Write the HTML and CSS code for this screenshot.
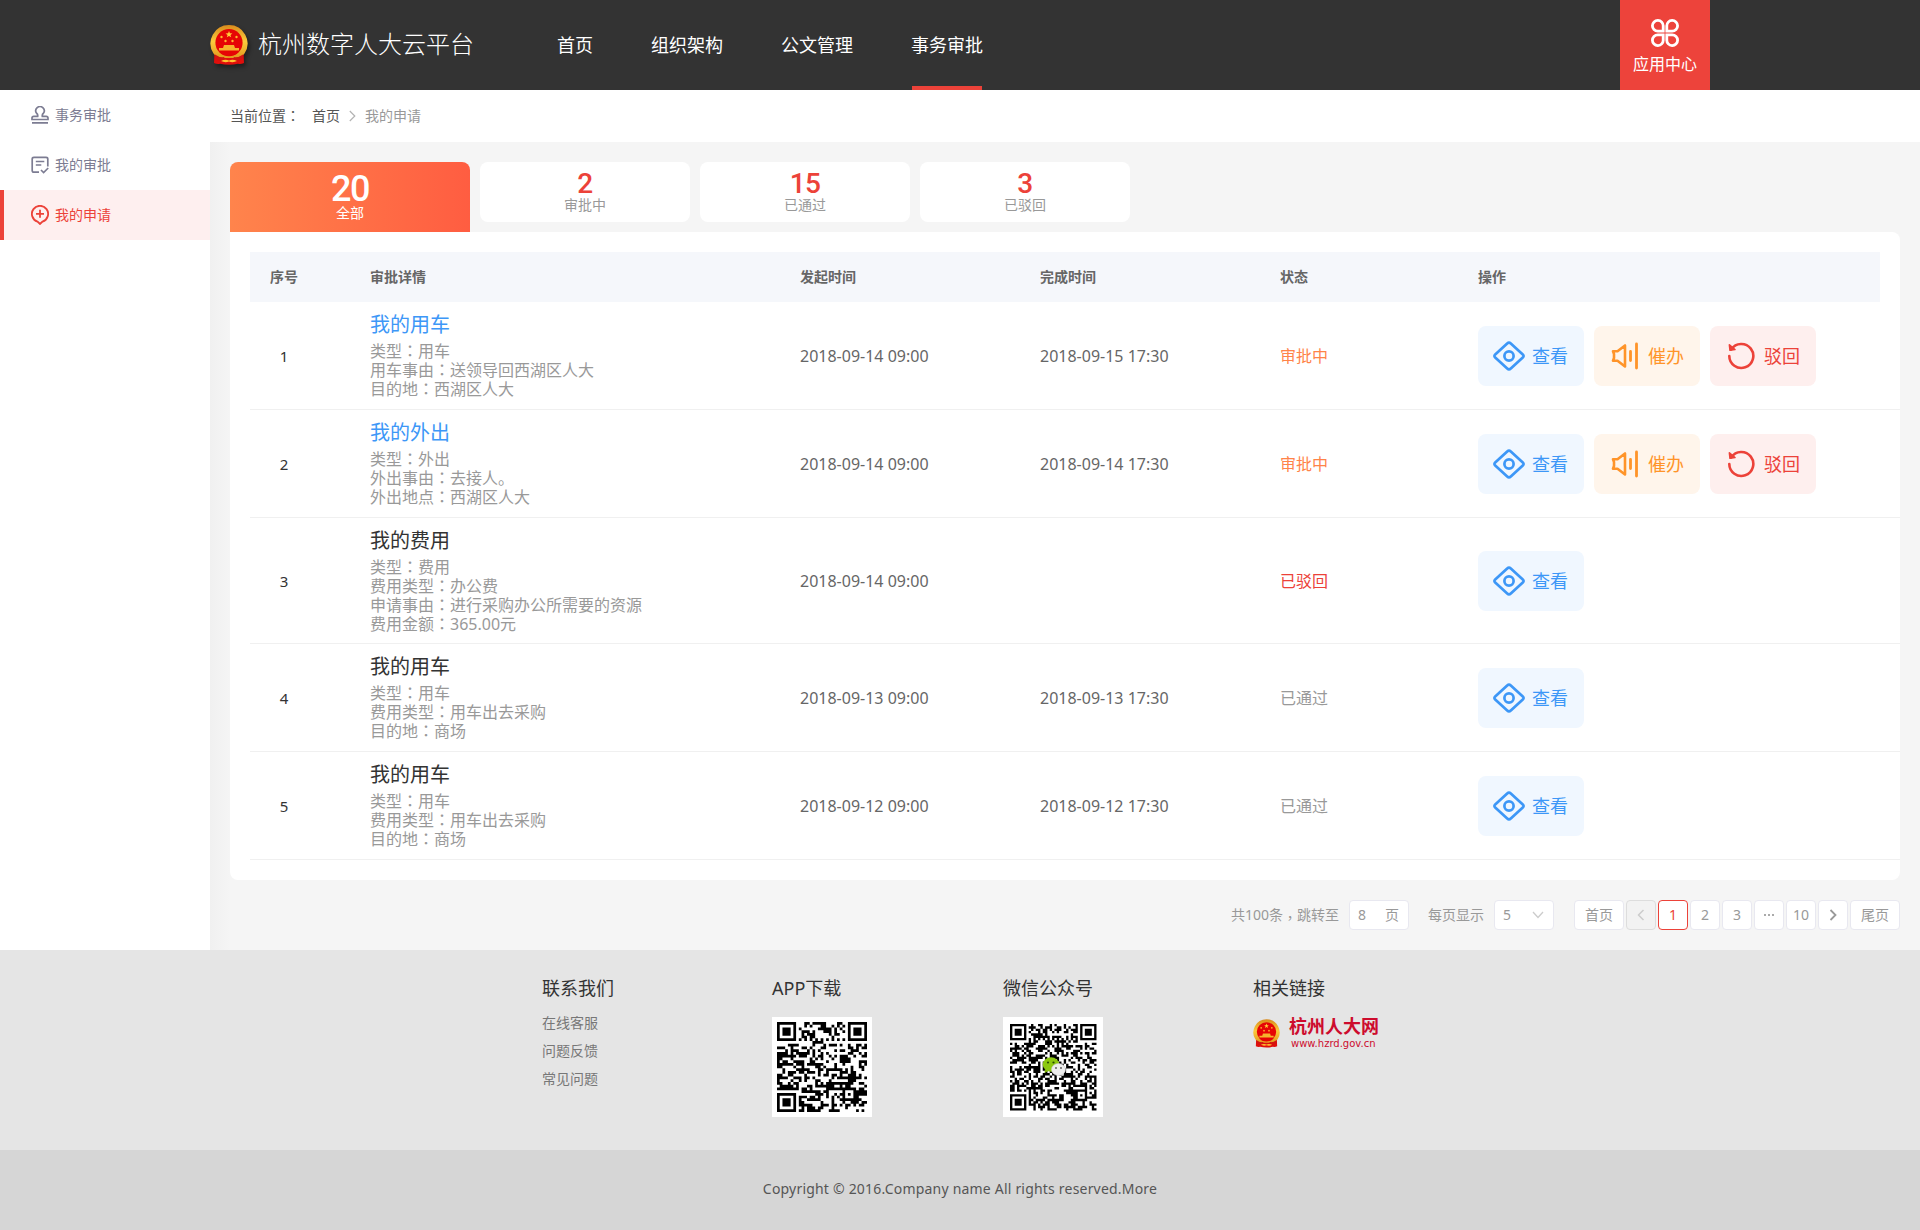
FILE: index.html
```html
<!DOCTYPE html>
<html lang="zh-CN">
<head>
<meta charset="utf-8">
<title>杭州数字人大云平台</title>
<link rel="stylesheet" href="styles.css">
</head>
<body>
<svg class="defs" width="0" height="0" aria-hidden="true">
  <defs>
    <linearGradient id="gold" x1="0" y1="0" x2="0" y2="1">
      <stop offset="0" stop-color="#d98a1c"/><stop offset=".5" stop-color="#fbcb3c"/><stop offset="1" stop-color="#e39a1e"/>
    </linearGradient>
    <symbol id="emblem" viewBox="0 0 38 40">
      <path d="M4.500 27l-.5 11q3 1.500 6 .8 9 2 18 0 3 .7 6-.8l-.5-11z" fill="#e00f0c"/>
      <path d="M19 0a18.500 18.500 0 0 1 15.500 28.600q-3 3.600-9 4.400h-13q-6-.8-9-4.400A18.500 18.500 0 0 1 19 0z" fill="url(#gold)"/>
      <circle cx="19" cy="17.700" r="13.600" fill="#e60505"/>
      <path d="M19 6l.9 2.300 2.500.1-2 1.500.8 2.400-2.200-1.400-2.200 1.400.8-2.400-2-1.500 2.500-.1z" fill="#ffcf3a"/>
      <g fill="#ffb52e"><circle cx="11.500" cy="12" r="1.200"/><circle cx="26.500" cy="12" r="1.200"/><circle cx="15.500" cy="16" r="1.200"/><circle cx="22.500" cy="16" r="1.200"/></g>
      <path d="M14 20h10l1 3h4v2.500H9V23h4z" fill="#f6b42c"/>
      <path d="M9.500 27h19q-2 3-5 3.300h-9q-3-.3-5-3.300z" fill="#e60505"/>
      <path d="M5 29.500q5 3.500 8.500 2.500l2 1.500-4 2.500q-3 .5-6.500-3zM33 29.500q-5 3.500-8.500 2.500l-2 1.500 4 2.500q3 .5 6.500-3z" fill="#d31310"/>
      <path d="M11 36q4-2 8-.5 4-1.500 8 .5-4 2-8 .5-4 1.500-8-.5z" fill="#ffc42f"/>
    </symbol>
    <symbol id="view" viewBox="0 0 34 30">
      <path d="M15.200 2.500q1.800-1.600 3.600 0l12 11q1.600 1.500 0 3l-12 11q-1.800 1.600-3.600 0l-12-11q-1.600-1.500 0-3z" fill="none" stroke="currentColor" stroke-width="2.700"/>
      <circle cx="17" cy="15" r="4.600" fill="none" stroke="currentColor" stroke-width="2.700"/>
    </symbol>
    <symbol id="urge" viewBox="0 0 28 28">
      <path d="M2 9.300h4.500l7.500-5.800v21l-7.500-5.800H2l1-2.700v-4z" fill="none" stroke="currentColor" stroke-width="2.600" stroke-linejoin="round"/>
      <path d="M19.500 9.500v9M25.500 2v24" stroke="currentColor" stroke-width="2.800" stroke-linecap="round"/>
    </symbol>
    <symbol id="back" viewBox="0 0 28 28">
      <path d="M4.300 7.300A12 12 0 1 1 2.300 14" fill="none" stroke="currentColor" stroke-width="2.600" stroke-linecap="round"/>
      <path d="M2.400 2.800l5.600 4.700-5 .8z" fill="currentColor" stroke="currentColor" stroke-width="1.600" stroke-linejoin="round"/>
    </symbol>
  </defs>
</svg>

<header class="header">
  <div class="brand">
    <svg class="brand-emblem" width="38" height="40"><use href="#emblem"/></svg>
    <span class="brand-name">杭州数字人大云平台</span>
  </div>
  <nav class="nav">
    <a class="nav-item">首页</a>
    <a class="nav-item">组织架构</a>
    <a class="nav-item">公文管理</a>
    <a class="nav-item nav-item-active">事务审批</a>
  </nav>
  <a class="app-center">
    <svg width="28" height="28" viewBox="0 0 28 28" fill="none" stroke="#fff" stroke-width="2.800">
      <path d="M12.200 12.200V7a5.400 5.400 0 1 0-5.400 5.200z"/><path d="M15.800 12.200V7a5.400 5.400 0 1 1 5.400 5.200z"/>
      <path d="M12.200 15.800V21a5.400 5.400 0 1 1-5.400-5.200z"/><path d="M15.800 15.800V21a5.400 5.400 0 1 0 5.400-5.200z"/>
    </svg>
    <span>应用中心</span>
  </a>
</header>

<div class="body">
  <aside class="sidebar">
    <a class="side-item">
      <svg width="18" height="18" viewBox="0 0 18 18" fill="none" stroke="currentColor" stroke-width="1.700">
        <path d="M6.700 10.300Q7 8.300 5.600 7.300A4.200 4.200 0 1 1 12.400 7.300Q11 8.300 11.300 10.300H15.200Q17 10.300 17 12V13.500H1V12Q1 10.300 2.800 10.300zM1 16.900h16"/>
      </svg>
      <span>事务审批</span>
    </a>
    <a class="side-item">
      <svg width="18" height="18" viewBox="0 0 18 18" fill="none" stroke="currentColor" stroke-width="1.700">
        <path d="M8 16.200H3Q1.200 16.200 1.200 14.500V3Q1.200 1.400 3 1.400H15Q16.800 1.400 16.800 3V10.500M4.800 5.500h8.500M4.800 9h5.500M10 14l2.600 2.500 4.600-4.500"/>
      </svg>
      <span>我的审批</span>
    </a>
    <a class="side-item side-item-active">
      <svg width="18" height="20" viewBox="0 0 18 20" fill="none" stroke="currentColor" stroke-width="1.800">
        <path d="M6.500 16.600A8.100 8.100 0 1 1 11.500 16.600L9 19zM9 4.800v8M5 8.800h8"/>
      </svg>
      <span>我的申请</span>
    </a>
  </aside>

  <main class="main">
    <div class="crumbs">
      <span class="crumbs-label">当前位置<span class="colon" lang="zh-TW">：</span></span>
      <a>首页</a>
      <svg width="7" height="12" viewBox="0 0 7 12" fill="none" stroke="#b3b3b3" stroke-width="1.200"><path d="M.8 1l5 5-5 5"/></svg>
      <span class="crumbs-current">我的申请</span>
    </div>

    <div class="content">
      <div class="tabs">
        <div class="tab tab-active"><b>20</b><span>全部</span></div>
        <div class="tab"><b>2</b><span>审批中</span></div>
        <div class="tab"><b>15</b><span>已通过</span></div>
        <div class="tab"><b>3</b><span>已驳回</span></div>
      </div>

      <section class="card">
        <div class="grid-row table-head">
          <span class="cell-no">序号</span><span>审批详情</span><span>发起时间</span><span>完成时间</span><span>状态</span><span>操作</span>
        </div>

        <div class="grid-row table-row">
          <span class="cell-no">1</span>
          <div class="detail">
            <h3 class="link">我的用车</h3>
            <p>类型<span class="colon" lang="zh-TW">：</span>用车</p><p>用车事由<span class="colon" lang="zh-TW">：</span>送领导回西湖区人大</p><p>目的地<span class="colon" lang="zh-TW">：</span>西湖区人大</p>
          </div>
          <time>2018-09-14 09:00</time><time>2018-09-15 17:30</time>
          <span class="status pending">审批中</span>
          <div class="actions">
            <a class="btn btn-view"><svg width="34" height="30"><use href="#view"/></svg>查看</a>
            <a class="btn btn-urge"><svg width="28" height="28"><use href="#urge"/></svg>催办</a>
            <a class="btn btn-back"><svg width="28" height="28"><use href="#back"/></svg>驳回</a>
          </div>
        </div>

        <div class="grid-row table-row">
          <span class="cell-no">2</span>
          <div class="detail">
            <h3 class="link">我的外出</h3>
            <p>类型<span class="colon" lang="zh-TW">：</span>外出</p><p>外出事由<span class="colon" lang="zh-TW">：</span>去接人。</p><p>外出地点<span class="colon" lang="zh-TW">：</span>西湖区人大</p>
          </div>
          <time>2018-09-14 09:00</time><time>2018-09-14 17:30</time>
          <span class="status pending">审批中</span>
          <div class="actions">
            <a class="btn btn-view"><svg width="34" height="30"><use href="#view"/></svg>查看</a>
            <a class="btn btn-urge"><svg width="28" height="28"><use href="#urge"/></svg>催办</a>
            <a class="btn btn-back"><svg width="28" height="28"><use href="#back"/></svg>驳回</a>
          </div>
        </div>

        <div class="grid-row table-row table-row-tall">
          <span class="cell-no">3</span>
          <div class="detail">
            <h3>我的费用</h3>
            <p>类型<span class="colon" lang="zh-TW">：</span>费用</p><p>费用类型<span class="colon" lang="zh-TW">：</span>办公费</p><p>申请事由<span class="colon" lang="zh-TW">：</span>进行采购办公所需要的资源</p><p>费用金额<span class="colon" lang="zh-TW">：</span>365.00元</p>
          </div>
          <time>2018-09-14 09:00</time><time></time>
          <span class="status rejected">已驳回</span>
          <div class="actions">
            <a class="btn btn-view"><svg width="34" height="30"><use href="#view"/></svg>查看</a>
          </div>
        </div>

        <div class="grid-row table-row">
          <span class="cell-no">4</span>
          <div class="detail">
            <h3>我的用车</h3>
            <p>类型<span class="colon" lang="zh-TW">：</span>用车</p><p>费用类型<span class="colon" lang="zh-TW">：</span>用车出去采购</p><p>目的地<span class="colon" lang="zh-TW">：</span>商场</p>
          </div>
          <time>2018-09-13 09:00</time><time>2018-09-13 17:30</time>
          <span class="status passed">已通过</span>
          <div class="actions">
            <a class="btn btn-view"><svg width="34" height="30"><use href="#view"/></svg>查看</a>
          </div>
        </div>

        <div class="grid-row table-row">
          <span class="cell-no">5</span>
          <div class="detail">
            <h3>我的用车</h3>
            <p>类型<span class="colon" lang="zh-TW">：</span>用车</p><p>费用类型<span class="colon" lang="zh-TW">：</span>用车出去采购</p><p>目的地<span class="colon" lang="zh-TW">：</span>商场</p>
          </div>
          <time>2018-09-12 09:00</time><time>2018-09-12 17:30</time>
          <span class="status passed">已通过</span>
          <div class="actions">
            <a class="btn btn-view"><svg width="34" height="30"><use href="#view"/></svg>查看</a>
          </div>
        </div>
      </section>

      <div class="pager">
        <span class="pager-total">共100条<span class="colon comma" lang="zh-TW">，</span>跳转至</span>
        <span class="field"><span>8</span><span>页</span></span>
        <span class="pager-size">每页显示</span>
        <span class="field"><span>5</span><svg width="12" height="8" viewBox="0 0 12 8" fill="none" stroke="#ccc" stroke-width="1.300"><path d="M1 1l5 5.500L11 1"/></svg></span>
        <div class="pages">
          <a class="page page-wide">首页</a>
          <a class="page page-disabled"><svg width="8" height="12" viewBox="0 0 8 12" fill="none" stroke="#ccc" stroke-width="1.500"><path d="M6.500 1L1.500 6l5 5"/></svg></a>
          <a class="page page-current">1</a>
          <a class="page">2</a>
          <a class="page">3</a>
          <a class="page"><svg width="10" height="2" viewBox="0 0 10 2" fill="#aaa"><path d="M0 0h2v2H0zM4 0h2v2H4zM8 0h2v2H8z"/></svg></a>
          <a class="page">10</a>
          <a class="page"><svg width="8" height="12" viewBox="0 0 8 12" fill="none" stroke="#999" stroke-width="1.800"><path d="M1.500 1l5 5-5 5"/></svg></a>
          <a class="page page-wide">尾页</a>
        </div>
      </div>
    </div>
  </main>
</div>

<footer>
  <div class="footer-main">
    <div class="foot-col foot-contact">
      <h4>联系我们</h4>
      <a>在线客服</a><a>问题反馈</a><a>常见问题</a>
    </div>
    <div class="foot-col foot-app">
      <h4>APP下载</h4>
      <svg class="qr" width="100" height="100" data-modules="33" data-offset="5" data-size="90" data-seed="7"></svg>
    </div>
    <div class="foot-col foot-wechat">
      <h4>微信公众号</h4>
      <div class="qr-wrap">
        <svg class="qr" width="100" height="100" data-modules="37" data-offset="7" data-size="86.500" data-seed="23"></svg>
        <svg class="wechat" width="24" height="20" viewBox="0 0 24 20">
          <path d="M3 12l-.5 4 4-2z" fill="#7cb500"/><ellipse cx="9" cy="7.500" rx="8.300" ry="7.200" fill="#8cc811"/>
          <circle cx="6" cy="5.500" r="1.100" fill="#274b00"/><circle cx="11.500" cy="5.500" r="1.100" fill="#274b00"/>
          <path d="M20 16l1.500 3-4-1.500z" fill="#ddd"/><ellipse cx="16.500" cy="12.500" rx="7" ry="6" fill="#ededed" stroke="#c9c9c9" stroke-width=".6"/>
          <circle cx="14" cy="11" r=".9" fill="#555"/><circle cx="19" cy="11" r=".9" fill="#555"/>
        </svg>
      </div>
    </div>
    <div class="foot-col">
      <h4>相关链接</h4>
      <a class="partner">
        <svg width="27" height="29"><use href="#emblem"/></svg>
        <span class="partner-text"><b>杭州人大网</b><i>www.hzrd.gov.cn</i></span>
      </a>
    </div>
  </div>
  <div class="copyright">Copyright © 2016.Company name All rights reserved.More</div>
</footer>
<script src="qr.js"></script>
</body>
</html>
```
FILE: qr.js
```js
// Fills each .qr element with a module pattern: finders, timing lines, alignment mark, data area.
document.querySelectorAll('.qr').forEach(function (svg) {
  var n = +svg.dataset.modules, off = +svg.dataset.offset;
  var unit = +svg.dataset.size / n, seed = +svg.dataset.seed;
  function rand() { seed = (seed * 16807) % 2147483647; return seed / 2147483647; }
  for (var k = 0; k < 20; k++) rand();
  function ring(x, y, cx, cy) { return Math.max(Math.abs(x - cx), Math.abs(y - cy)); }
  function dark(x, y) {
    var r = rand() < 0.52;
    var finders = [[3, 3], [n - 4, 3], [3, n - 4]];
    for (var i = 0; i < 3; i++) {
      var d = ring(x, y, finders[i][0], finders[i][1]);
      if (d <= 4) return d < 2 || d === 3;
    }
    var a = ring(x, y, n - 7, n - 7);
    if (a <= 2) return a !== 1;
    if (x === 6 || y === 6) return (x + y) % 2 === 0;
    return r;
  }
  var d = '';
  for (var y = 0; y < n; y++) {
    for (var x = 0; x < n; x++) {
      if (dark(x, y)) d += 'M' + (off + x * unit).toFixed(2) + ' ' + (off + y * unit).toFixed(2) +
        'h' + unit.toFixed(2) + 'v' + unit.toFixed(2) + 'h-' + unit.toFixed(2) + 'z';
    }
  }
  var path = document.createElementNS('http://www.w3.org/2000/svg', 'path');
  path.setAttribute('d', d);
  svg.appendChild(path);
});
```
FILE: styles.css
```css
* { box-sizing: border-box; }
body, h3, h4, p { margin: 0; font-weight: inherit; }
body {
  width: 1920px;
  background: #f5f5f5;
  color: #333;
  font: 400 14px/20px "Noto Sans", "Noto Sans CJK SC", sans-serif;
}
svg { display: block; flex: none; }
.defs { position: absolute; }
.colon { font-family: "Noto Sans CJK TC", sans-serif; line-height: 0; }
.comma { vertical-align: -3px; }

/* Header */
.header { display: flex; height: 90px; padding-left: 210px; background: #333; color: #fff; }
.brand { display: flex; align-items: center; gap: 10px; width: 347px; }
.brand-emblem { filter: drop-shadow(2px 3px 2px rgba(0, 0, 0, .4)); }
.brand-name { padding-bottom: 2px; font-size: 24px; font-weight: 300; line-height: 36px; white-space: nowrap; }
.nav { display: flex; gap: 58px; }
.nav-item { display: flex; align-items: center; font-size: 18px; line-height: 26px; }
.nav-item-active { background: linear-gradient(#ec4239, #ec4239) center bottom / 70px 4px no-repeat; }
.app-center {
  display: flex; flex-direction: column; align-items: center;
  width: 90px; margin-left: auto; margin-right: 210px; padding-top: 19px;
  background: #ed433b; font-size: 16px; line-height: 24px; gap: 5px;
}

/* Body */
.body { display: flex; height: 860px; }
.sidebar { width: 210px; background: #fff; }
.side-item { display: flex; align-items: center; gap: 6px; height: 50px; padding-left: 31px; color: #7c7c92; }
.side-item-active { padding-left: 27px; border-left: 4px solid #ec4239; background: #feefef; color: #ec4239; }
.main { flex: 1; }
.crumbs { display: flex; align-items: center; height: 52px; padding-left: 20px; background: #fff; color: #555; }
.crumbs-label { width: 82px; }
.crumbs svg { margin: 0 9px; }
.crumbs-current { color: #999; }
.content { height: 808px; padding: 20px 20px 0; background: linear-gradient(90deg, #f0f0f0, #f5f5f5 20px); }

/* Tabs */
.tabs { display: flex; gap: 10px; height: 70px; }
.tab {
  display: flex; flex-direction: column; align-items: center;
  width: 210px; height: 60px; padding-top: 8px;
  border-radius: 8px; background: #fff; color: #999;
}
.tab b { color: #ec4239; font: 500 28px/28px Roboto, sans-serif; letter-spacing: -.6px; }
.tab span { line-height: 14px; }
.tab-active {
  width: 240px; height: 70px; padding-top: 10px;
  border-radius: 8px 8px 0 0; background: linear-gradient(90deg, #ff844c, #ff5d41); color: #fff;
}
.tab-active b { color: #fff; font-size: 36px; line-height: 34px; letter-spacing: -1.5px; }

/* Table */
.card { height: 648px; padding: 20px 0 0 20px; border-radius: 0 8px 8px 8px; background: #fff; }
.grid-row { display: grid; grid-template-columns: 120px 430px 240px 240px 198px 1fr; align-items: center; }
.table-head { height: 50px; margin-right: 20px; background: #f5f7fb; color: #666; font-weight: 700; }
.cell-no { width: 68px; text-align: center; }
.table-row { height: 108px; border-bottom: 1px solid #f0f0f0; font-size: 16px; }
.table-row-tall { height: 126px; }
.table-row .cell-no { font-size: 15px; }
.detail { align-self: start; padding-top: 10px; color: #999; }
.detail h3 { color: #333; font-size: 20px; line-height: 26px; margin-bottom: 4px; }
.detail h3.link { color: #3d97f7; }
.detail p { line-height: 19px; }
time { color: #666; }
.pending { color: #ff8349; }
.rejected { color: #ec4239; }
.passed { color: #999; }
.actions { display: flex; gap: 10px; }
.btn { display: flex; align-items: center; width: 106px; height: 60px; border-radius: 8px; font-size: 18px; padding-left: 14px; gap: 6px; }
.btn-view { background: #f0f7ff; color: #3d97f7; }
.btn-urge { background: #fff5eb; color: #ff9429; padding-left: 17px; gap: 9px; }
.btn-back { background: #feefee; color: #ec4239; padding-left: 17px; gap: 9px; }

/* Pagination */
.pager { display: flex; justify-content: flex-end; align-items: center; height: 30px; margin-top: 20px; color: #999; }
.pager-total { margin-right: 10px; }
.pager-size { margin: 0 10px 0 19px; }
.field {
  display: flex; align-items: center; justify-content: space-between;
  width: 60px; height: 30px; padding: 0 9px 0 8px; border: 1px solid #e8e8f0; border-radius: 4px; background: #fff;
}
.pages { display: flex; gap: 2px; margin-left: 20px; }
.page {
  display: flex; align-items: center; justify-content: center;
  width: 30px; height: 30px; border: 1px solid #e8e8f0; border-radius: 4px; background: #fff;
}
.page-wide { width: 50px; }
.page-disabled { border-color: #ddd; background: #f2f2f2; }
.page-current { border-color: #ec4239; color: #ec4239; }

/* Footer */
.footer-main { display: flex; height: 200px; padding: 25px 0 0 542px; background: #e5e5e5; }
.foot-col h4 { margin-bottom: 16px; font-size: 18px; line-height: 26px; }
.foot-contact { width: 230px; }
.foot-contact h4 { margin-bottom: 8px; }
.foot-contact a { display: block; color: #777; line-height: 28px; }
.foot-app { width: 231px; }
.foot-wechat { width: 250px; }
.qr { background: #fff; }
.qr-wrap { position: relative; width: 100px; }
.wechat { position: absolute; left: 39px; top: 40px; }
.partner { display: flex; gap: 9px; padding-top: 2px; }
.partner-text { display: flex; flex-direction: column; color: #cd0c2d; }
.partner-text b { margin-top: -5px; font-size: 18px; line-height: 24px; }
.partner-text i { padding-left: 2px; font: normal 10px/12px "DejaVu Sans", sans-serif; }
.copyright { height: 80px; background: #d6d6d6; color: #555; line-height: 78px; letter-spacing: .2px; text-align: center; }
```
